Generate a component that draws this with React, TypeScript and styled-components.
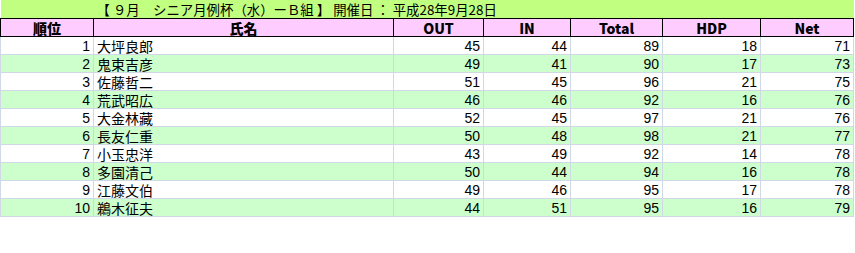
import React from "react";
import styled, { createGlobalStyle } from "styled-components";

const Global = createGlobalStyle`
  html, body { margin: 0; padding: 0; background: #ffffff; }
  body { font-family: "Liberation Sans", "Noto Sans CJK JP", sans-serif; }
`;

const Table = styled.table`
  width: 853px;
  border-collapse: collapse;
  table-layout: fixed;
  font-family: "Liberation Sans", "Noto Sans CJK JP", sans-serif;
  font-size: 14px;
  color: #000;
`;

const TitleRow = styled.tr`
  height: 18px;
  background: #c0ff80;
`;

const TitleCell = styled.td`
  padding: 0 0 0 3px;
  height: 18px;
  line-height: 17px;
  white-space: pre;
  font-size: 13.4px;
  font-family: "Noto Sans CJK JP", sans-serif;
  vertical-align: middle;
`;

const HeadRow = styled.tr`
  height: 18px;
  background: #ffccff;
`;

const HeadCell = styled.th`
  border: 1px solid #000;
  padding: 0;
  height: 17px;
  line-height: 16px;
  font-weight: 900;
  font-size: 14px;
  text-align: center;
  font-family: "Noto Sans CJK JP", "Liberation Sans", sans-serif;
`;

const Row = styled.tr<{ $alt: boolean }>`
  height: 18px;
  background: ${(p) => (p.$alt ? "#ccffcc" : "#ffffff")};
`;

const Cell = styled.td<{ $align?: "left" | "right" }>`
  border: 1px solid #d0d7e5;
  padding: 0 3px;
  height: 17px;
  line-height: 16px;
  text-align: ${(p) => p.$align ?? "right"};
  font-family: ${(p) =>
    p.$align === "left"
      ? `"Noto Sans CJK JP", sans-serif`
      : `"Liberation Sans", sans-serif`};
  white-space: nowrap;
  overflow: hidden;
`;

const widths = [93, 300, 90, 87, 92, 98, 93];
const headers = ["順位", "氏名", "OUT", "IN", "Total", "HDP", "Net"];

const data: [number, string, number, number, number, number, number][] = [
  [1, "大坪良郎", 45, 44, 89, 18, 71],
  [2, "鬼束吉彦", 49, 41, 90, 17, 73],
  [3, "佐藤哲二", 51, 45, 96, 21, 75],
  [4, "荒武昭広", 46, 46, 92, 16, 76],
  [5, "大金林藏", 52, 45, 97, 21, 76],
  [6, "長友仁重", 50, 48, 98, 21, 77],
  [7, "小玉忠洋", 43, 49, 92, 14, 78],
  [8, "多園清己", 50, 44, 94, 16, 78],
  [9, "江藤文伯", 49, 46, 95, 17, 78],
  [10, "鵜木征夫", 44, 51, 95, 16, 79],
];

export default function App() {
  return (
    <>
      <Global />
      <Table>
        <colgroup>
          {widths.map((w, i) => (
            <col key={i} style={{ width: w }} />
          ))}
        </colgroup>
        <tbody>
          <TitleRow>
            <td />
            <TitleCell colSpan={6}>【 ９月　シニア月例杯（水）ーＢ組 】 開催日 ： 平成28年9月28日</TitleCell>
          </TitleRow>
          <HeadRow>
            {headers.map((h) => (
              <HeadCell key={h}>{h}</HeadCell>
            ))}
          </HeadRow>
          {data.map((r, i) => (
            <Row key={r[0]} $alt={i % 2 === 1}>
              <Cell>{r[0]}</Cell>
              <Cell $align="left">{r[1]}</Cell>
              <Cell>{r[2]}</Cell>
              <Cell>{r[3]}</Cell>
              <Cell>{r[4]}</Cell>
              <Cell>{r[5]}</Cell>
              <Cell>{r[6]}</Cell>
            </Row>
          ))}
        </tbody>
      </Table>
    </>
  );
}
